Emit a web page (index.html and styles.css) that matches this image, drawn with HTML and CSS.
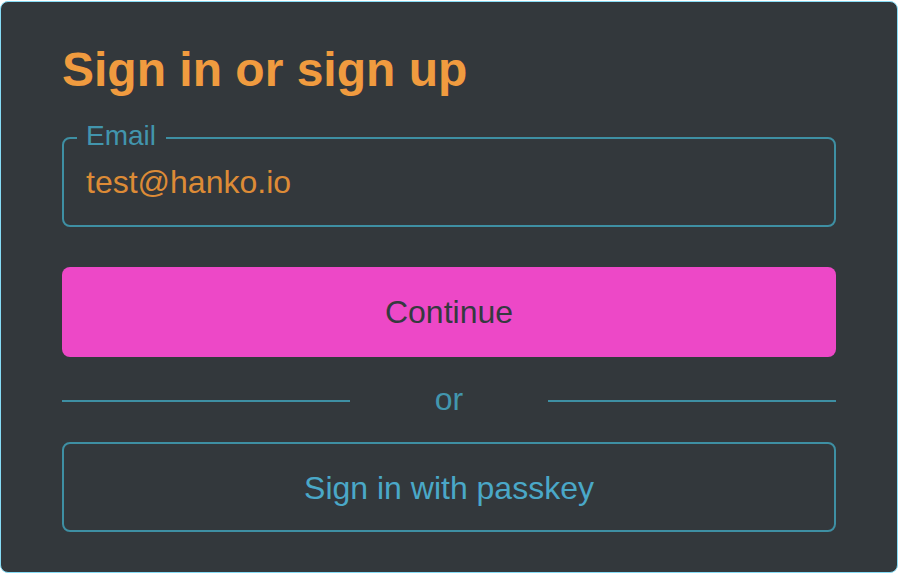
FILE: index.html
```html
<!DOCTYPE html>
<html lang="en">
<head>
<meta charset="utf-8">
<title>Sign in or sign up</title>
<link rel="stylesheet" href="styles.css">
</head>
<body>
<div class="card">
  <h1 class="title">Sign in or sign up</h1>
  <fieldset class="field">
    <legend class="field-label">Email</legend>
    <input class="field-input" type="email" value="test@hanko.io">
  </fieldset>
  <button class="btn btn-primary" type="button">Continue</button>
  <div class="divider">
    <span class="divider-line"></span>
    <span class="divider-text">or</span>
    <span class="divider-line"></span>
  </div>
  <button class="btn btn-secondary" type="button">Sign in with passkey</button>
</div>
</body>
</html>
```
FILE: styles.css
```css
html, body {
  margin: 0;
  padding: 0;
  background: #ffffff;
}

.card {
  margin-top: 1px;
  width: 898px;
  height: 572px;
  box-sizing: border-box;
  border: 1px solid #86dcf6;
  border-radius: 8px;
  background: #33383c;
  padding: 40px 61px;
  font-family: "Liberation Sans", Arial, sans-serif;
  display: flex;
  flex-direction: column;
}

.title {
  margin: 0;
  font-size: 48px;
  line-height: 56px;
  font-weight: 700;
  color: #f09b3f;
}

.field {
  margin: 22px 0 0;
  padding: 0 12px 23px 13px;
  border: 2px solid #3e8fa3;
  border-radius: 8px;
  min-inline-size: 0;
}

.field-label {
  padding: 0 10px 4px 9px;
  font-size: 28px;
  line-height: 32px;
  color: #4295ad;
}

.field-input {
  display: block;
  box-sizing: border-box;
  width: 100%;
  height: 40px;
  margin: 6px 0 0;
  padding: 0 0 0 9px;
  border: none;
  outline: none;
  background: transparent;
  font-family: inherit;
  font-size: 32px;
  line-height: 40px;
  color: #dd8b36;
}

.btn {
  display: flex;
  align-items: center;
  justify-content: center;
  height: 90px;
  box-sizing: border-box;
  border-radius: 8px;
  font-family: inherit;
  font-size: 32px;
  padding: 0;
  cursor: pointer;
}

.btn-primary {
  margin-top: 40px;
  border: none;
  background: #ed48c7;
  color: #353a3f;
}

.btn-secondary {
  margin-top: 23px;
  padding-top: 2px;
  border: 2px solid #3e8fa3;
  background: transparent;
  color: #4aa8c8;
}

.divider {
  margin-top: 22px;
  height: 40px;
  display: flex;
  align-items: center;
}

.divider-line {
  flex: 1;
  height: 2px;
  margin-top: 4px;
  background: #3e8fa3;
}

.divider-text {
  padding: 0 85px;
  font-size: 32px;
  line-height: 40px;
  color: #4296ae;
}
```
